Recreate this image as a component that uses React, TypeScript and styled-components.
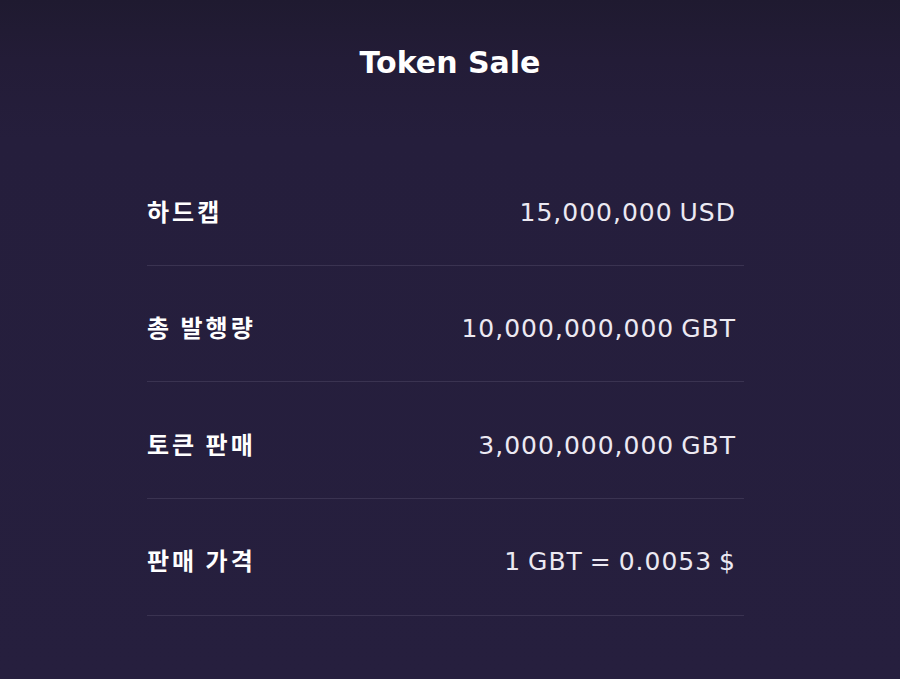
import React from "react";
import styled, { createGlobalStyle } from "styled-components";

const Global = createGlobalStyle`
  html, body {
    margin: 0;
    padding: 0;
    background: #251e3c;
  }
  #root {
    min-height: 679px;
  }
`;

const Page = styled.div`
  min-height: 679px;
  background: linear-gradient(180deg, #1f1a30 0px, #231c37 60px, #251e3c 140px, #261f3e 100%);
  padding-top: 45px;
  box-sizing: border-box;
`;

const Title = styled.h1`
  margin: 0;
  text-align: center;
  font-family: "DejaVu Sans", "Noto Sans", sans-serif;
  font-weight: 700;
  font-size: 30px;
  line-height: 36px;
  color: #ffffff;
`;

const Table = styled.div`
  margin: 68px 0 0 147px;
  width: 597px;
  display: flex;
  flex-direction: column;
`;

const Row = styled.div`
  display: flex;
  justify-content: space-between;
  align-items: baseline;
  padding: 46.5px 9px 37.17px 0;
  line-height: 30px;
  border-bottom: 1px solid #3a3351;
`;

const Label = styled.span`
  font-family: "Noto Sans CJK KR", "Noto Sans", sans-serif;
  font-weight: 700;
  font-size: 24px;
  letter-spacing: 3px;
  color: #ffffff;
`;

const Value = styled.span`
  font-family: "DejaVu Sans", "Noto Sans", sans-serif;
  font-weight: 400;
  font-size: 25px;
  letter-spacing: 1px;
  word-spacing: -2px;
  margin-right: -1px;
  color: #ece9f2;
`;

const rows = [
  { label: "하드캡", value: "15,000,000 USD" },
  { label: "총 발행량", value: "10,000,000,000 GBT" },
  { label: "토큰 판매", value: "3,000,000,000 GBT" },
  { label: "판매 가격", value: "1 GBT = 0.0053 $" },
];

export default function App() {
  return (
    <>
      <Global />
      <Page>
        <Title>Token Sale</Title>
        <Table>
          {rows.map((r) => (
            <Row key={r.label}>
              <Label>{r.label}</Label>
              <Value>{r.value}</Value>
            </Row>
          ))}
        </Table>
      </Page>
    </>
  );
}
